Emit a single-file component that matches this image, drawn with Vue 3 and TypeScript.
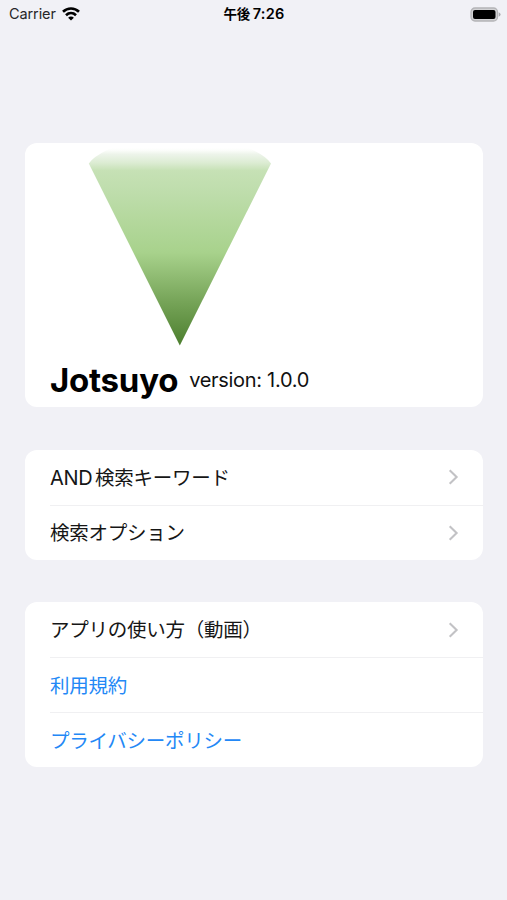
<script setup lang="ts">
interface Row {
  latin?: string
  label: string
  link?: boolean
}

const groups: Row[][] = [
  [{ latin: 'AND', label: '検索キーワード' }, { label: '検索オプション' }],
  [
    { label: 'アプリの使い方（動画）' },
    { label: '利用規約', link: true },
    { label: 'プライバシーポリシー', link: true },
  ],
]
</script>

<template>
  <div class="screen">
    <header class="status">
      <div class="carrier">
        <span>Carrier</span>
        <svg class="wifi" width="18" height="14" viewBox="0 0 18 14" fill="none" stroke="#000" stroke-width="2.6">
          <path d="M1 4.8C5.5.4 12.5.4 17 4.8" />
          <path d="M4 8.2C6.9 5.4 11.1 5.4 14 8.2" />
          <path d="M9 13.6 6.1 10.7C7.7 9.1 10.3 9.1 11.9 10.7Z" fill="#000" stroke="none" />
        </svg>
      </div>
      <div class="time"><span class="meridiem">午後</span>7:26</div>
      <div class="battery">
        <svg width="31" height="15" viewBox="0 0 31 15">
          <rect x="1" y="1" width="26.5" height="13" rx="4" fill="#d2d2d4" stroke="#b4b4b7" stroke-width="1.3" />
          <rect x="3" y="3" width="22.5" height="9" rx="2" fill="#000" />
          <path d="M28.7 5.2Q30.6 6 30.6 7.5T28.7 9.8Z" fill="#aaaaae" />
        </svg>
      </div>
    </header>

    <main class="list">
      <section class="card about">
        <svg class="logo" width="184" height="198" viewBox="0 0 184 198">
          <defs>
            <linearGradient id="cone" x1="0" y1="0" x2="0" y2="197" gradientUnits="userSpaceOnUse">
              <stop offset="0" stop-color="#ffffff" />
              <stop offset=".012" stop-color="#fbfdfa" />
              <stop offset=".032" stop-color="#edf4ea" />
              <stop offset=".075" stop-color="#dcecd3" />
              <stop offset=".115" stop-color="#c6e1b5" />
              <stop offset=".2" stop-color="#c0deae" />
              <stop offset=".53" stop-color="#a8d28c" />
              <stop offset=".78" stop-color="#76a458" />
              <stop offset="1" stop-color="#4d7f2f" />
            </linearGradient>
          </defs>
          <path d="M.8 15.5Q5 9 19 2L24 0H160L165 2Q179 9 183 15.5L91.8 197.5Z" fill="url(#cone)" />
        </svg>
        <div class="title">
          <h1>Jotsuyo</h1>
          <span class="version">version: 1.0.0</span>
        </div>
      </section>

      <section v-for="(rows, g) in groups" :key="g" class="card">
        <div v-for="row in rows" :key="row.label" class="row" :class="{ link: row.link }">
          <span class="label"><span v-if="row.latin" class="latin">{{ row.latin }}</span>{{ row.label }}</span>
          <svg v-if="!row.link" class="chevron" width="11" height="16" viewBox="0 0 11 16">
            <path d="M1.7 1.3 8.6 8 1.7 14.7" fill="none" stroke="#c2c2c5" stroke-width="2.1" />
          </svg>
        </div>
      </section>
    </main>
  </div>
</template>

<style>
body {
  background: #f1f1f6;
}
</style>

<style scoped>
.screen {
  width: 507px;
  height: 900px;
  overflow: hidden;
  background: #f1f1f6;
  color: #000;
  font-family: Inter, 'Noto Sans CJK JP', sans-serif;
}

.status {
  display: grid;
  grid-template-columns: 1fr auto 1fr;
  align-items: center;
  height: 27px;
  padding: 0 6px 0 9px;
}

.carrier {
  display: flex;
  align-items: center;
  gap: 6px;
  height: 26px;
  margin-bottom: 1px;
  font-size: 14.5px;
  line-height: 26px;
  letter-spacing: -0.1px;
  color: #262628;
}

.time {
  margin-right: 2px;
  font-size: 14.5px;
  line-height: 27px;
  font-weight: 600;
  letter-spacing: 0.25px;
}

.meridiem {
  margin-right: 2.5px;
  font-size: 13.5px;
  font-weight: 600;
  letter-spacing: -0.2px;
}

.battery {
  display: flex;
  justify-content: flex-end;
}

.list {
  display: flex;
  flex-direction: column;
  gap: 42.5px;
  padding: 115.5px 24.5px 0 25px;
}

.card {
  border-radius: 12px;
  background: #fff;
}

.about {
  box-sizing: border-box;
  height: 264.5px;
  padding: 5.5px 25px 0;
}

.logo {
  display: block;
  margin-left: 38px;
}

.title {
  display: flex;
  align-items: center;
  gap: 11px;
  margin-top: 12.5px;
}

h1 {
  margin: 0;
  font-size: 33px;
  line-height: 42px;
  font-weight: 700;
  letter-spacing: -0.25px;
}

.version {
  font-size: 20px;
  line-height: 42px;
  letter-spacing: -0.3px;
  color: #111;
}

.row {
  box-sizing: border-box;
  display: flex;
  align-items: center;
  justify-content: space-between;
  height: 55px;
  margin-left: 25px;
  padding-right: 24px;
  color: #161616;
}

.row + .row {
  border-top: 1px solid #f0f0f2;
}

.label {
  padding-top: 1px;
  font-size: 19.5px;
  line-height: 28px;
  letter-spacing: -0.25px;
  white-space: nowrap;
}

.latin {
  margin-right: 2.5px;
  font-size: 20px;
}

.row.link {
  color: #2388f6;
}
</style>
